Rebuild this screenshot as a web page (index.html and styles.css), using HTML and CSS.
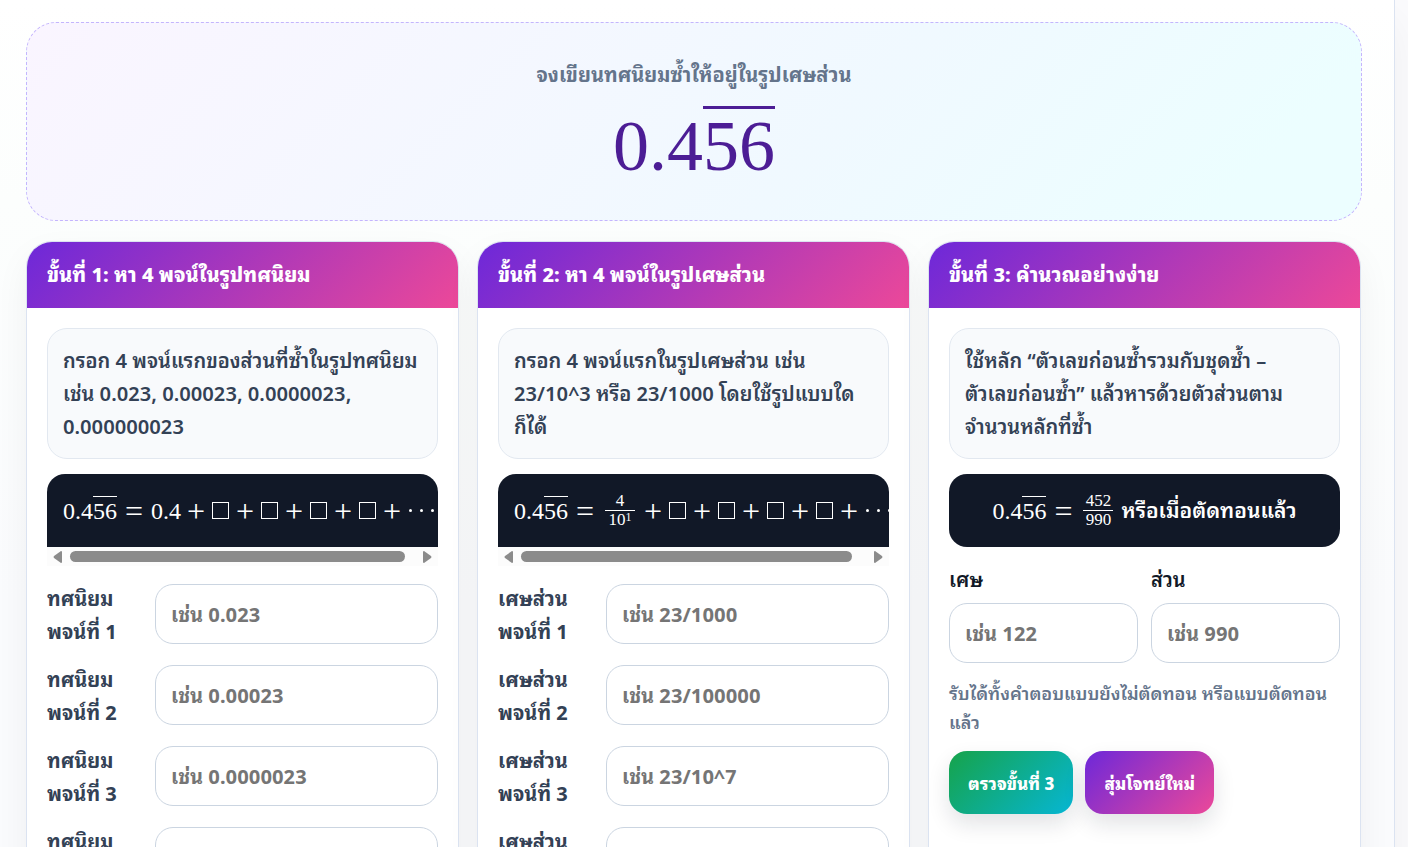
FILE: index.html
```html
<!DOCTYPE html>
<html lang="th">
<head>
<meta charset="utf-8">
<title>ทศนิยมซ้ำ</title>
<link rel="stylesheet" href="styles.css">
</head>
<body>
<main class="shell">
  <section class="problem">
    <p class="problem-label">จงเขียนทศนิยมซ้ำให้อยู่ในรูปเศษส่วน</p>
    <div class="problem-math">0.4<span class="over">56</span></div>
  </section>
  <div class="steps">
    <section class="card">
      <h2 class="card-head">ขั้นที่ 1: หา 4 พจน์ในรูปทศนิยม</h2>
      <div class="card-body">
        <p class="note">กรอก 4 พจน์แรกของส่วนที่ซ้ำในรูปทศนิยม<br>เช่น 0.023, 0.00023, 0.0000023,<br>0.000000023</p>
        <div class="scroller">
          <div class="formula clipped"><span>0.4<span class="over">56</span></span><span class="op eq">=</span><span>0.4</span><span class="op">+</span><i class="blank"></i><span class="op">+</span><i class="blank"></i><span class="op">+</span><i class="blank"></i><span class="op">+</span><i class="blank"></i><span class="op">+</span><span class="dots"><i></i><i></i><i></i></span></div>
          <div class="track"><svg width="9" height="12" viewBox="0 0 9 12"><path d="M9 1v10Q9 12 8 12L1 7Q0 6 1 5L8 0Q9 0 9 1z"/></svg><div class="rail"><div class="thumb" style="width:97%"></div></div><svg width="9" height="12" viewBox="0 0 9 12"><path d="M0 1v10Q0 12 1 12L8 7Q9 6 8 5L1 0Q0 0 0 1z"/></svg></div>
        </div>
        <div class="row"><label for="d1">ทศนิยม<br>พจน์ที่ 1</label><input id="d1" type="text" placeholder="เช่น 0.023"></div>
        <div class="row"><label for="d2">ทศนิยม<br>พจน์ที่ 2</label><input id="d2" type="text" placeholder="เช่น 0.00023"></div>
        <div class="row"><label for="d3">ทศนิยม<br>พจน์ที่ 3</label><input id="d3" type="text" placeholder="เช่น 0.0000023"></div>
        <div class="row"><label for="d4">ทศนิยม<br>พจน์ที่ 4</label><input id="d4" type="text" placeholder="เช่น 0.000000023"></div>
      </div>
    </section>
    <section class="card">
      <h2 class="card-head">ขั้นที่ 2: หา 4 พจน์ในรูปเศษส่วน</h2>
      <div class="card-body">
        <p class="note">กรอก 4 พจน์แรกในรูปเศษส่วน เช่น<br>23/10^3 หรือ 23/1000 โดยใช้รูปแบบใด<br>ก็ได้</p>
        <div class="scroller">
          <div class="formula clipped"><span>0.4<span class="over">56</span></span><span class="op eq">=</span><span class="frac"><span>4</span><span>10<sup>1</sup></span></span><span class="op">+</span><i class="blank"></i><span class="op">+</span><i class="blank"></i><span class="op">+</span><i class="blank"></i><span class="op">+</span><i class="blank"></i><span class="op">+</span><span class="dots"><i></i><i></i><i></i></span></div>
          <div class="track"><svg width="9" height="12" viewBox="0 0 9 12"><path d="M9 1v10Q9 12 8 12L1 7Q0 6 1 5L8 0Q9 0 9 1z"/></svg><div class="rail"><div class="thumb" style="width:96%"></div></div><svg width="9" height="12" viewBox="0 0 9 12"><path d="M0 1v10Q0 12 1 12L8 7Q9 6 8 5L1 0Q0 0 0 1z"/></svg></div>
        </div>
        <div class="row"><label for="f1">เศษส่วน<br>พจน์ที่ 1</label><input id="f1" type="text" placeholder="เช่น 23/1000"></div>
        <div class="row"><label for="f2">เศษส่วน<br>พจน์ที่ 2</label><input id="f2" type="text" placeholder="เช่น 23/100000"></div>
        <div class="row"><label for="f3">เศษส่วน<br>พจน์ที่ 3</label><input id="f3" type="text" placeholder="เช่น 23/10^7"></div>
        <div class="row"><label for="f4">เศษส่วน<br>พจน์ที่ 4</label><input id="f4" type="text" placeholder="เช่น 23/10^9"></div>
      </div>
    </section>
    <section class="card">
      <h2 class="card-head">ขั้นที่ 3: คำนวณอย่างง่าย</h2>
      <div class="card-body">
        <p class="note">ใช้หลัก “ตัวเลขก่อนซ้ำรวมกับชุดซ้ำ –<br>ตัวเลขก่อนซ้ำ” แล้วหารด้วยตัวส่วนตาม<br>จำนวนหลักที่ซ้ำ</p>
        <div class="formula centered"><span>0.4<span class="over">56</span></span><span class="op eq">=</span><span class="frac"><span>452</span><span>990</span></span><span class="words">หรือเมื่อตัดทอนแล้ว</span></div>
        <div class="pair">
          <div class="field"><label for="num">เศษ</label><input id="num" type="text" placeholder="เช่น 122"></div>
          <div class="field"><label for="den">ส่วน</label><input id="den" type="text" placeholder="เช่น 990"></div>
        </div>
        <p class="help">รับได้ทั้งคำตอบแบบยังไม่ตัดทอน หรือแบบตัดทอน<br>แล้ว</p>
        <div class="actions"><button class="btn check" type="button">ตรวจขั้นที่ 3</button><button class="btn fresh" type="button">สุ่มโจทย์ใหม่</button></div>
      </div>
    </section>
  </div>
</main>
</body>
</html>
```
FILE: styles.css
```css
* { box-sizing: border-box; }
html { height: 100%; overflow: hidden; }
body {
  height: 100%;
  margin: 0;
  overflow: hidden;
  padding-right: 13px;
  background: #fbfbfd;
  color: #111827;
  font-family: "Noto Sans Thai Looped", "Noto Sans", "Noto Sans Thai", sans-serif;
  font-size: 20px;
  font-weight: 600;
  line-height: 33px;
}
p, h2 { margin: 0; }
.shell {
  min-height: 100%;
  padding: 22px 32px 32px 26px;
  border-right: 1px solid #dbe3f1;
  background: linear-gradient(#fff, #fcfefd 200px, #fafbfd 600px);
  box-shadow: 0 18px 45px rgba(15, 23, 42, 0.05);
}
.problem {
  padding: 34px 35px 35px;
  border: 1px dashed #c4b5fd;
  border-radius: 30px;
  background: linear-gradient(135deg, #faf5ff, #f0f9ff 60%, #ecfeff 90%);
  text-align: center;
}
.problem-label { color: #64748b; font-weight: 700; }
.problem-math {
  padding-top: 16px;
  color: #4c1d95;
  font: 72px/78px "Liberation Serif", serif;
}
.over { border-top: 1px solid currentColor; }
.problem-math .over { display: inline-block; border-top-width: 3px; line-height: 75px; }
.steps {
  display: grid;
  grid-template-columns: repeat(3, minmax(0, 1fr));
  gap: 18px;
  margin-top: 20px;
  padding-right: 1px;
}
.card {
  overflow: hidden;
  border: 1px solid #dbe3f1;
  border-radius: 26px;
  background: #fff;
  box-shadow: 0 14px 35px rgba(15, 23, 42, 0.05);
}
.card-head {
  padding: 15px 20px 18px;
  background: linear-gradient(135deg, #6d28d9, #ec4899);
  color: #fff;
  font-size: 20px;
  font-weight: 800;
}
.card-body {
  display: grid;
  grid-template-columns: minmax(0, 1fr);
  gap: 15px;
  padding: 20px;
}
.note {
  padding: 14px 15px 16px;
  border: 1px solid #e2e8f0;
  border-radius: 20px;
  background: #f8fafc;
  color: #334155;
  white-space: nowrap;
}
.formula {
  display: flex;
  align-items: center;
  gap: 5px;
  height: 73px;
  padding: 0 16px;
  overflow: hidden;
  border-radius: 18px;
  background: #111827;
  color: #fff;
  font-family: "Liberation Serif", serif;
  font-size: 24px;
  font-weight: 400;
  line-height: 28px;
  white-space: nowrap;
}
.formula > * { flex: none; }
.formula.clipped { border-radius: 18px 18px 0 0; }
.formula.centered { justify-content: center; }
.formula .over { display: inline-block; line-height: 28px; }
.op { width: 20px; font-size: 32px; text-align: center; }
.eq { margin: 0 2px; }
.blank { width: 17px; height: 17px; margin: 0 1px; border: 1px solid #fff; }
.dots { display: flex; gap: 8px; padding: 0 2px; }
.dots i { width: 3px; height: 3px; border-radius: 50%; background: #fff; }
.frac {
  display: grid;
  min-width: 36px;
  padding: 0 3px;
  font-size: 17px;
  line-height: 18px;
  text-align: center;
}
.frac > :last-child { border-top: 1px solid #fff; }
.frac sup { font-size: 12px; line-height: 0; vertical-align: 4px; }
.words {
  padding-bottom: 3px;
  font-family: "Noto Sans Thai Looped", "Noto Sans", "Noto Sans Thai", sans-serif;
  font-size: 21px;
  font-weight: 600;
}
.track {
  display: flex;
  align-items: center;
  gap: 8px;
  height: 19px;
  padding: 0 6px;
  background: #fcfcfc;
  fill: #8b8b8b;
}
.rail { flex: 1; }
.thumb { height: 11px; border-radius: 6px; background: #8b8b8b; }
.row {
  display: grid;
  grid-template-columns: 95px minmax(0, 1fr);
  gap: 13px;
  align-items: center;
}
.row label { color: #334155; font-weight: 700; white-space: nowrap; }
input {
  width: 100%;
  height: 60px;
  padding: 0 15px 2px;
  border: 1px solid #cbd5e1;
  border-radius: 18px;
  background: #fff;
  color: #111827;
  font: inherit;
  font-weight: 700;
}
input::placeholder { color: #757575; }
.pair { display: grid; grid-template-columns: 1fr 1fr; gap: 13px; }
.field { display: grid; gap: 8px; }
.help { color: #64748b; font-size: 18px; line-height: 29px; white-space: nowrap; }
.actions { display: flex; gap: 12px; }
.btn {
  height: 63px;
  padding: 0 19px;
  border: 0;
  border-radius: 18px;
  color: #fff;
  font: inherit;
  font-size: 17px;
  font-weight: 800;
  white-space: nowrap;
  box-shadow: 0 10px 22px rgba(15, 23, 42, 0.12);
}
.check { background: linear-gradient(135deg, #16a34a, #06b6d4); }
.fresh { background: linear-gradient(135deg, #6d28d9, #ec4899); }
```
